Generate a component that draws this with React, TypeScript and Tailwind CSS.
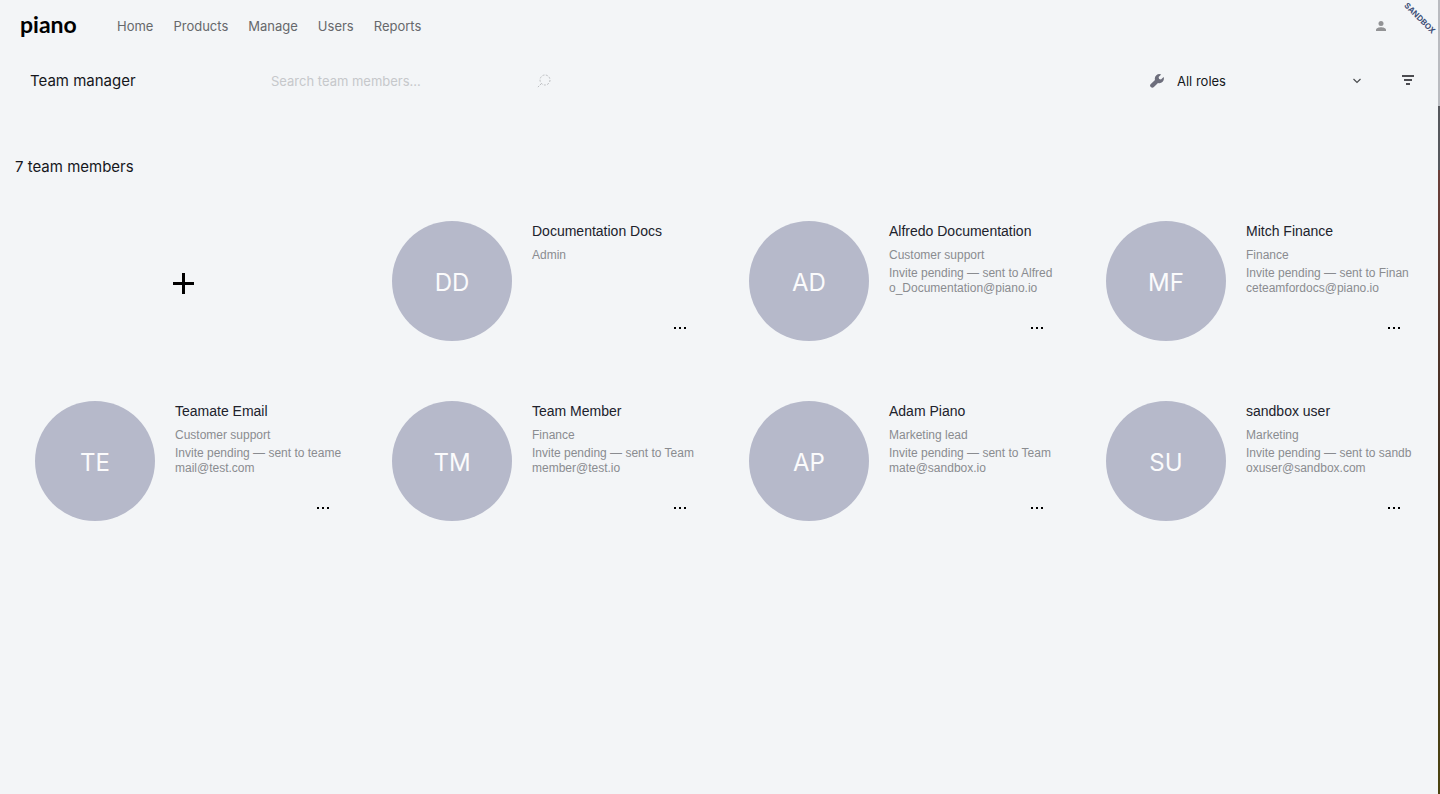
import React from "react";

type Member = { initials: string; name: string; role: string; invite?: [string, string] };

const members: Member[] = [
  { initials: "DD", name: "Documentation Docs", role: "Admin" },
  { initials: "AD", name: "Alfredo Documentation", role: "Customer support", invite: ["Invite pending — sent to Alfred", "o_Documentation@piano.io"] },
  { initials: "MF", name: "Mitch Finance", role: "Finance", invite: ["Invite pending — sent to Finan", "ceteamfordocs@piano.io"] },
  { initials: "TE", name: "Teamate Email", role: "Customer support", invite: ["Invite pending — sent to teame", "mail@test.com"] },
  { initials: "TM", name: "Team Member", role: "Finance", invite: ["Invite pending — sent to Team", "member@test.io"] },
  { initials: "AP", name: "Adam Piano", role: "Marketing lead", invite: ["Invite pending — sent to Team", "mate@sandbox.io"] },
  { initials: "SU", name: "sandbox user", role: "Marketing", invite: ["Invite pending — sent to sandb", "oxuser@sandbox.com"] },
];

const links = ["Home", "Products", "Manage", "Users", "Reports"];

function Header() {
  return (
    <header className="flex h-[52px] items-center pr-[51px] pl-5">
      <a href="#home" className="w-[97px] pb-1 font-['Lato'] text-[23px] leading-6 font-bold text-black">
        piano
      </a>
      <nav className="flex gap-5">
        {links.map((l) => (
          <a key={l} href={`#${l.toLowerCase()}`} className="text-[13px] leading-5 text-[#66686b]">
            {l}
          </a>
        ))}
      </nav>
      <button type="button" aria-label="Account" className="ml-auto">
        <svg width="12" height="12" viewBox="0 0 12 12" fill="#929395">
          <circle cx="6" cy="3.4" r="2.5" />
          <path d="M1 11V9.8C1 8.1 3.8 7.2 6 7.2s5 .9 5 2.6V11z" />
        </svg>
      </button>
      <span className="absolute top-[13px] right-0 flex w-10 origin-center rotate-45 justify-center text-[8px] leading-[10px] font-bold text-[#3f5077]">
        SANDBOX
      </span>
    </header>
  );
}

function Toolbar() {
  return (
    <div className="flex h-[57px] items-center pr-[23px] pl-[30px]">
      <h1 className="w-[241px] text-[15px] leading-5 text-[#15171c]">Team manager</h1>
      <div className="flex w-[280px] items-center">
        <input
          type="text"
          aria-label="Search team members"
          placeholder="Search team members..."
          className="min-w-0 flex-1 bg-transparent text-[13px] leading-5 outline-none placeholder:text-[#c6c8cb]"
        />
        <button type="button" aria-label="Search">
          <svg width="14" height="14" viewBox="0 0 14 14" fill="none" stroke="#bcbec1">
            <circle cx="8" cy="6" r="5" strokeDasharray="2 1.4" />
            <path d="M4.4 9.6L.6 13.4" strokeDasharray="2 1" />
          </svg>
        </button>
      </div>
      <div className="ml-auto flex items-center gap-[13px]">
        <svg width="14" height="14" viewBox="0 0 14 14" fill="#6d6e7c" aria-hidden="true">
          <path d="M11.2.5A4.600 4.600 0 0 0 5 6L.8 9.900a2.200 2.200 0 0 0 0 3.100 2.200 2.200 0 0 0 3.100.100L8 9a4.600 4.600 0 0 0 5.600-6L11 5.400 9.100 4.900 8.600 3z" />
        </svg>
        <span className="relative flex items-center">
          <select
            aria-label="Role"
            className="w-[185px] appearance-none bg-transparent text-[13px] leading-5 text-[#15171c] outline-none"
          >
            <option>All roles</option>
          </select>
          <svg
            width="10"
            height="6"
            viewBox="0 0 10 6"
            fill="none"
            stroke="#4b4d50"
            strokeWidth="1.2"
            className="pointer-events-none absolute right-0"
          >
            <path d="M1.5 1L5 4.5 8.5 1" />
          </svg>
        </span>
      </div>
      <button type="button" aria-label="Filter" className="ml-[39px]">
        <svg width="14" height="14" viewBox="0 0 14 14" fill="#4c4c51">
          <path d="M1 1h12v2H1zM3 5h8v2H3zM5 9h4v2H5z" />
        </svg>
      </button>
    </div>
  );
}

function Card({ m }: { m: Member }) {
  return (
    <li className="flex h-[180px] gap-5 py-[30px] pl-[30px]">
      <div className="flex size-[120px] shrink-0 items-center justify-center rounded-full bg-[#b6b9ca] pt-[3px] text-[24px] text-[#fbfbfc]">
        {m.initials}
      </div>
      <div className="flex min-w-0 flex-1 flex-col font-['Liberation_Sans',sans-serif] whitespace-nowrap">
        <h2 className="text-[14px] leading-5 text-[#20222c]">{m.name}</h2>
        <p className="mt-1 mb-px text-[12px] leading-5 text-[#8a8c90]">{m.role}</p>
        {m.invite && (
          <p className="text-[12px] leading-[15px] text-[#8a8c90]">
            {m.invite[0]}
            <br />
            {m.invite[1]}
          </p>
        )}
        <button type="button" aria-label={`Options for ${m.name}`} className="mt-auto mr-8 self-end pb-3">
          <svg width="14" height="2" viewBox="0 0 14 2" fill="#000" shapeRendering="crispEdges">
            <path d="M1 0h2v2H1zM6 0h2v2H6zM11 0h2v2h-2z" />
          </svg>
        </button>
      </div>
    </li>
  );
}

export default function App() {
  return (
    <div className="relative flex min-h-screen overflow-hidden bg-[#f3f5f7] font-['Inter',sans-serif]">
      <div className="min-w-0 flex-1">
        <Header />
        <Toolbar />
        <main className="pt-12">
          <h2 className="pl-[15px] text-[15px] leading-5 text-[#15171c]">7 team members</h2>
          <ul className="mt-[14px] grid grid-cols-4 px-[5px]">
            <li className="flex h-[180px] items-center justify-center">
              <button type="button" aria-label="Add team member" className="mt-1">
                <svg width="21" height="21" viewBox="0 0 21 21" fill="#000">
                  <path d="M9 0h3v21H9zM0 9h21v3H0z" />
                </svg>
              </button>
            </li>
            {members.map((m) => (
              <Card key={m.initials} m={m} />
            ))}
          </ul>
        </main>
      </div>
      <div className="flex w-[2px] flex-col">
        <div className="h-[106px] bg-[#b9bbc0]" />
        <div className="h-[64px] bg-[#55575c]" />
        <div className="flex-1 bg-gradient-to-b from-[#6b3f3a] via-[#3c2a1c] to-[#4c4410]" />
      </div>
    </div>
  );
}
